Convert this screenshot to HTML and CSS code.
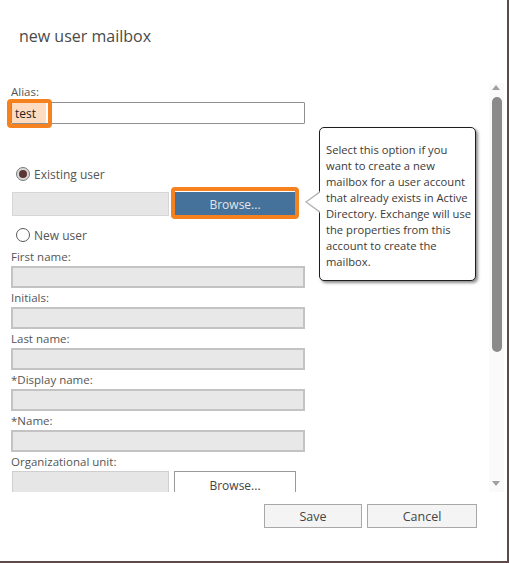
FILE: index.html
```html
<!DOCTYPE html>
<html>
<head>
<meta charset="utf-8">
<link rel="stylesheet" href="styles.css">
</head>
<body>
<div class="window">
  <div class="title">new user mailbox</div>
  <div class="body">
    <div class="scroll">
      <div class="lbl">Alias:</div>
      <div class="field alias"><span class="alias-val">test</span></div>

      <div class="radio-row first-radio"><span class="radio checked"></span><span>Existing user</span></div>
      <div class="pick-row">
        <div class="pick-box"></div>
        <div class="btn-browse primary">Browse...</div>
      </div>
      <div class="radio-row second-radio"><span class="radio"></span><span>New user</span></div>

      <div class="lbl">First name:</div>
      <div class="field disabled"></div>
      <div class="lbl">Initials:</div>
      <div class="field disabled"></div>
      <div class="lbl">Last name:</div>
      <div class="field disabled"></div>
      <div class="lbl">*Display name:</div>
      <div class="field disabled"></div>
      <div class="lbl">*Name:</div>
      <div class="field disabled"></div>
      <div class="lbl">Organizational unit:</div>
      <div class="pick-row ou">
        <div class="pick-box"></div>
        <div class="btn-browse">Browse...</div>
      </div>
    </div>
    <div class="scrollbar">
      <span class="arrow up"></span>
      <span class="thumb"></span>
      <span class="arrow down"></span>
    </div>
  </div>
  <div class="actions">
    <div class="btn">Save</div>
    <div class="btn cancel">Cancel</div>
  </div>

  <span class="hl hl-alias"></span>
  <span class="hl hl-browse"></span>

  <div class="tip">
    <span class="tip-arrow"></span>
    <div class="tip-text">Select this option if you<br>want to create a new<br>mailbox for a user account<br>that already exists in Active<br>Directory. Exchange will use<br>the properties from this<br>account to create the<br>mailbox.</div>
  </div>
</div>
</body>
</html>
```

FILE: styles.css
```css
html, body {
  margin: 0;
  padding: 0;
  background: #fff;
}
body {
  font-family: "Open Sans", "Noto Sans", sans-serif;
  font-size: 11.5px;
  color: #444;
}
.window {
  position: relative;
  width: 507px;
  height: 561px;
  border-right: 2px solid #5e4848;
  border-bottom: 2px solid #5e4848;
  background: #fff;
  display: flex;
  flex-direction: column;
}
.title {
  height: 80px;
  box-sizing: border-box;
  padding: 25px 0 0 19px;
  font-size: 16px;
  line-height: 22px;
  color: #4a4a4a;
}
.body {
  height: 412px;
  display: flex;
}
.scroll {
  width: 489px;
  box-sizing: border-box;
  padding: 2px 0 0 11px;
  overflow: hidden;
}
.lbl {
  height: 19px;
  line-height: 19px;
  color: #555;
}
.scroll > .lbl:first-child {
  height: 20px;
}
.field {
  width: 294px;
  height: 22px;
  box-sizing: border-box;
}
.alias {
  border: 1px solid #8f8f8f;
  border-radius: 1px;
  display: flex;
  align-items: center;
}
.alias-val {
  background: #fddcc1;
  color: #222;
  height: 20px;
  line-height: 21px;
  padding: 0 10px 0 3px;
  font-size: 12px;
}
.field.disabled {
  background: #e8e8e8;
  border: 2px solid #c3c3c3;
}
.radio-row {
  display: flex;
  align-items: center;
  gap: 4px;
  height: 18px;
  padding-left: 5px;
  color: #555;
  font-size: 12px;
}
.first-radio {
  margin-top: 41px;
}
.second-radio {
  margin-bottom: 3px;
}
.radio {
  width: 12px;
  height: 12px;
  border: 1px solid #5a5a5a;
  border-radius: 50%;
  background: #fff;
  box-sizing: content-box;
  position: relative;
}
.radio.checked {
  background: #d9d9d9;
  border-color: #7a7a7a;
}
.radio.checked::after {
  content: "";
  position: absolute;
  left: 2px;
  top: 2px;
  width: 8px;
  height: 8px;
  border-radius: 50%;
  background: #5a3636;
}
.pick-row {
  display: flex;
  gap: 5px;
  height: 24px;
  margin: 9px 0 10px 1px;
}
.pick-box {
  width: 157px;
  box-sizing: border-box;
  background: #e6e6e6;
  border: 1px solid #d6d6d6;
}
.btn-browse {
  width: 122px;
  box-sizing: border-box;
  border: 1px solid #9a9a9a;
  background: #fff;
  display: flex;
  align-items: center;
  justify-content: center;
  font-size: 12px;
  color: #444;
}
.btn-browse.primary {
  background: #44729a;
  border-color: #44729a;
  color: #e4e4e4;
}
.pick-row.ou {
  margin: 0 0 0 1px;
  height: 26px;
}
.pick-row.ou .pick-box {
  border-color: #cfcfcf;
}
.pick-row.ou .btn-browse {
  align-items: flex-start;
  padding-top: 5px;
}
.scrollbar {
  position: relative;
  width: 15px;
  margin-top: 3px;
  background: #fafafa;
}
.arrow {
  position: absolute;
  left: 3px;
  width: 0;
  height: 0;
  border-left: 4px solid transparent;
  border-right: 4px solid transparent;
}
.arrow.up {
  top: 2px;
  border-bottom: 5px solid #a0a0a0;
}
.arrow.down {
  bottom: 6px;
  border-top: 5px solid #a0a0a0;
}
.thumb {
  position: absolute;
  left: 3px;
  top: 14px;
  width: 10px;
  height: 255px;
  border-radius: 5px;
  background: #8a8a8a;
}
.actions {
  flex: 1;
  display: flex;
  justify-content: flex-end;
  align-items: flex-start;
  gap: 5px;
  padding: 12px 30px 0 0;
}
.btn {
  width: 98px;
  height: 24px;
  box-sizing: border-box;
  border: 1px solid #a8a8a8;
  background: #f4f4f4;
  display: flex;
  align-items: center;
  justify-content: center;
  font-size: 12.5px;
  color: #444;
  padding-top: 1px;
}
.btn.cancel {
  width: 110px;
}
.hl {
  position: absolute;
  border: 4px solid #f5821f;
  border-radius: 4px;
  box-sizing: border-box;
}
.hl-alias {
  left: 7px;
  top: 99px;
  width: 45px;
  height: 29px;
}
.hl-browse {
  left: 171px;
  top: 187px;
  width: 128px;
  height: 32px;
}
.tip {
  position: absolute;
  left: 319px;
  top: 127px;
  width: 157px;
  height: 154px;
  box-sizing: border-box;
  border: 1px solid #1e1e1e;
  border-radius: 5px;
  background: #fff;
  box-shadow: 2px 2px 3px rgba(0, 0, 0, 0.45);
  padding: 14px 0 0 6px;
}
.tip-arrow {
  position: absolute;
  left: -15px;
  top: 63px;
  width: 0;
  height: 0;
  border-top: 11px solid transparent;
  border-bottom: 11px solid transparent;
  border-right: 15px solid #b0b0b0;
}
.tip-arrow::after {
  content: "";
  position: absolute;
  left: 2px;
  top: -10px;
  width: 0;
  height: 0;
  border-top: 10px solid transparent;
  border-bottom: 10px solid transparent;
  border-right: 14px solid #fff;
}
.tip-text {
  font-size: 11.2px;
  line-height: 16px;
  color: #3a3a3a;
  white-space: nowrap;
}
```
